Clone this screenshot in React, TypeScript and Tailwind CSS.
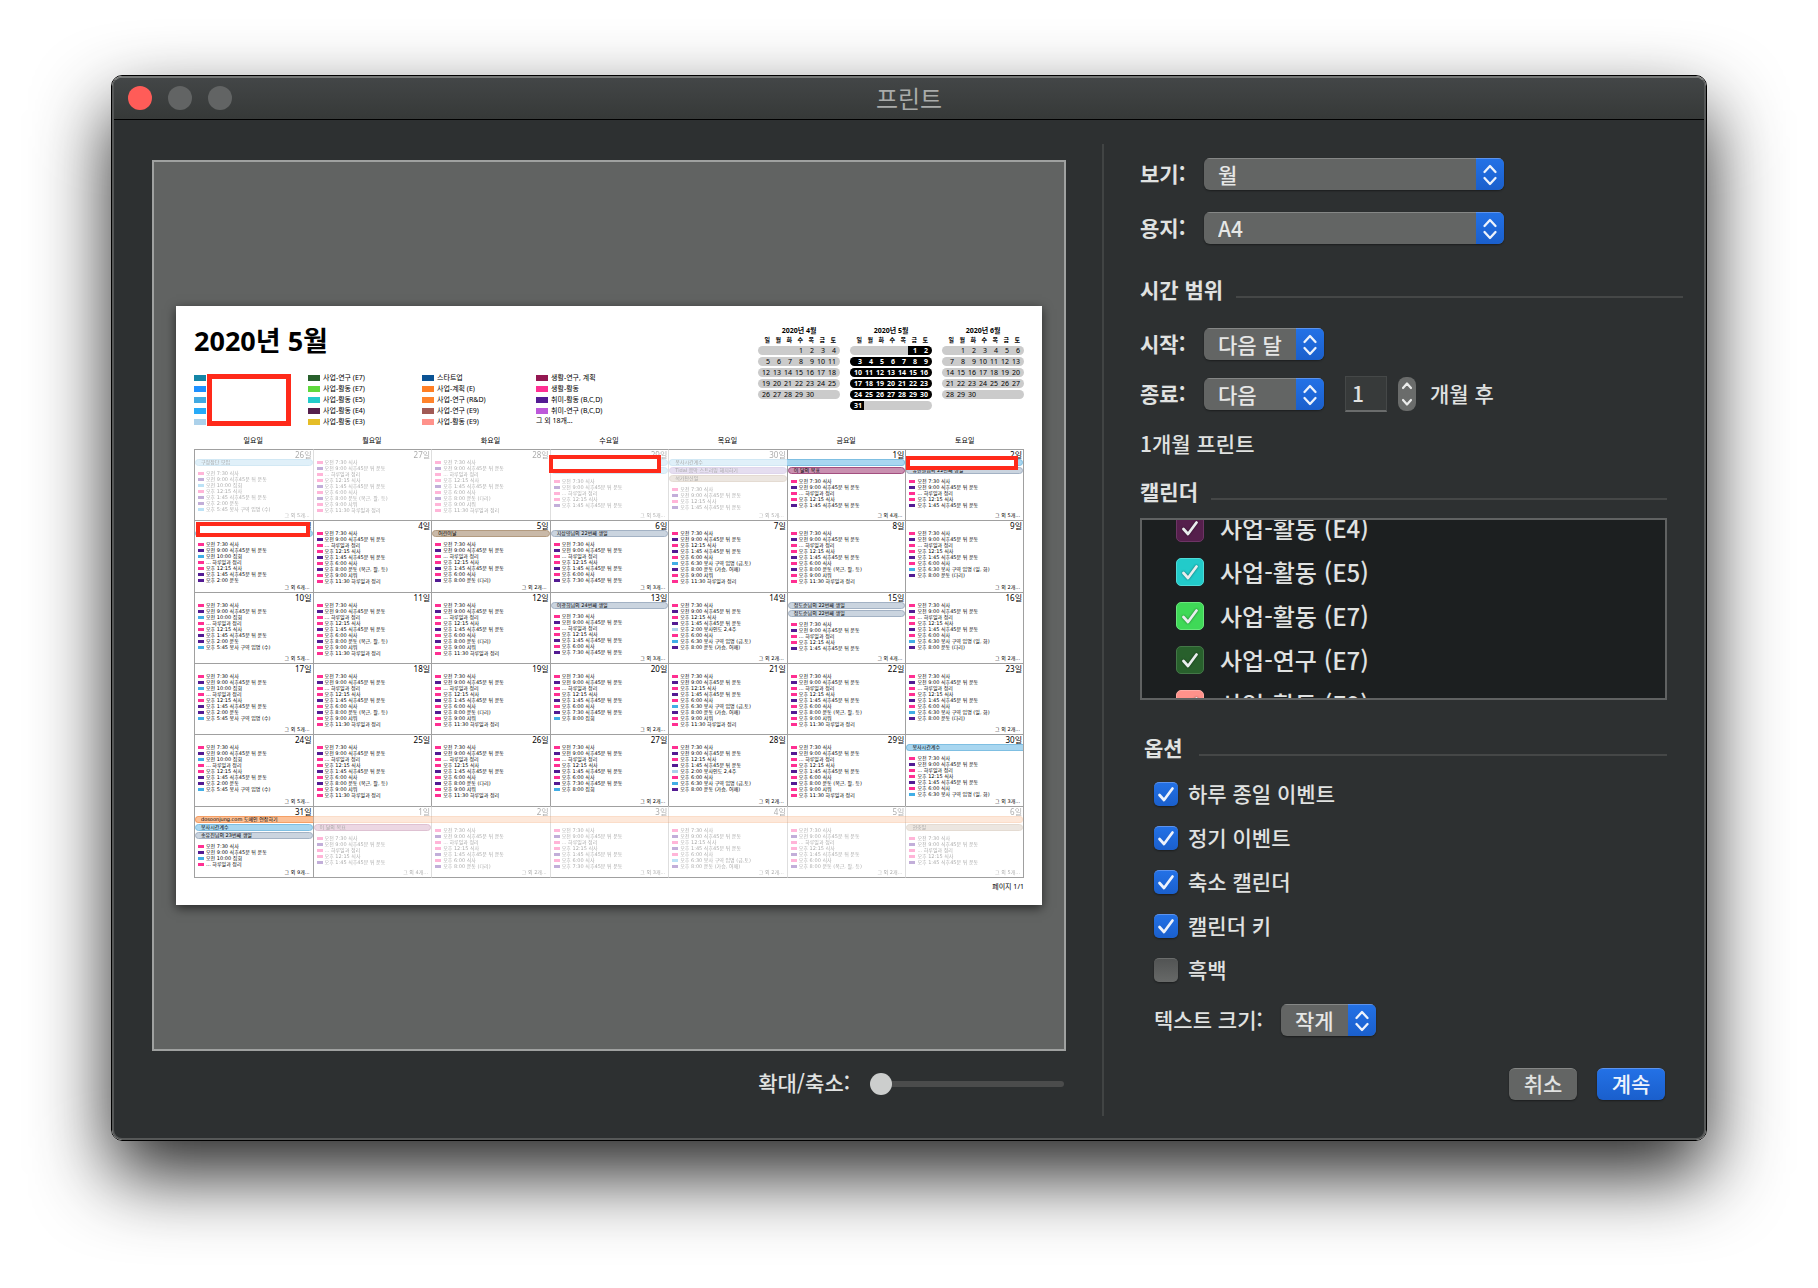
import React from "react";

type Kind = "pink" | "violet" | "sky" | "pale";

const SWATCH: Record<Kind, string> = {
  pink: "bg-[#ff2f92]",
  violet: "bg-[#531b93]",
  sky: "bg-[#41aee6]",
  pale: "bg-[#a9d0ea]",
};

const EVENTS: Record<string, [Kind, string]> = {
  a: ["pink", "오전 7:30 식사"],
  b: ["violet", "오전 9:00 식후45분 뒤 운동"],
  c: ["sky", "오전 10:00 집회"],
  d: ["pink", "... 하루일과 정리"],
  e: ["pink", "오후 12:15 식사"],
  f: ["violet", "오후 1:45 식후45분 뒤 운동"],
  g: ["violet", "오후 2:00 운동"],
  h: ["sky", "오후 5:45 봉사 구역 임명 (수)"],
  i: ["pink", "오후 6:00 식사"],
  j: ["violet", "오후 8:00 운동 (복근, 팔, 등)"],
  k: ["violet", "오후 8:00 운동 (다리)"],
  l: ["pink", "오후 9:00 샤워"],
  m: ["pink", "오후 11:30 하루일과 정리"],
  n: ["sky", "오후 6:30 봉사 구역 임명 (금,토)"],
  o: ["violet", "오후 8:00 운동 (가슴, 어깨)"],
  q: ["sky", "오후 6:30 봉사 구역 임명 (일, 화)"],
  r: ["violet", "오후 7:30 식후45분 뒤 운동"],
  t: ["sky", "오후 8:00 집회"],
  u: ["pale", "오후 2:00 봉사인도 2,4주"],
};

type Tone = "blue" | "purple" | "tan" | "rose" | "slate" | "orange";

const TONES: Record<Tone, string> = {
  blue: "border-[#7fbfe2] bg-[#a8d6f0]",
  purple: "border-[#a58bc9] bg-[#b7a2d6]",
  tan: "border-[#b39b80] bg-[#c9b9a8]",
  rose: "border-[#a34f80] bg-[#c990b0]",
  slate: "border-[#a3b2c4] bg-[#cad4df]",
  orange: "border-[#f5a066] bg-[#fcc096]",
};

type Edge = "full" | "start" | "mid" | "end";

const EDGES: Record<Edge, string> = {
  full: "rounded-full border",
  start: "rounded-l-full border-y border-l",
  mid: "-ml-px border-y",
  end: "-ml-px rounded-r-full border-y border-r",
};

type Banner = { tone: Tone; text?: string; edge?: Edge };

type Day = {
  date: number;
  events: string;
  more?: number;
  faded?: boolean;
  banners?: Banner[];
  mark?: string;
};

const WEEKS: Day[][] = [
  [
    { date: 26, faded: true, events: "abcefgh", more: 5, banners: [{ tone: "blue", text: "구정장단 모임" }] },
    { date: 27, faded: true, events: "abdefijlm" },
    { date: 28, faded: true, events: "abdefiklm" },
    {
      date: 29,
      faded: true,
      events: "abdef",
      more: 5,
      banners: [{ tone: "blue" }, { tone: "blue" }],
      mark: "-left-[2px] right-[7px] top-[5px] h-[18px]",
    },
    {
      date: 30,
      faded: true,
      events: "abef",
      more: 5,
      banners: [
        { tone: "blue", text: "봉사시간계수", edge: "start" },
        { tone: "purple", text: "Tidal 음악 스트리밍 해지하기" },
        { tone: "tan", text: "석가탄신일" },
      ],
    },
    { date: 1, events: "abdef", more: 4, banners: [{ tone: "blue", edge: "end" }, { tone: "rose", text: "이 달의 목표" }] },
    {
      date: 2,
      events: "abdef",
      more: 5,
      banners: [{ tone: "blue" }, { tone: "slate", text: "유한결님의 22번째 생일" }],
      mark: "left-0 right-[5px] top-[6px] h-[14px]",
    },
  ],
  [
    { date: 3, events: "abcdefg", more: 6, banners: [{ tone: "blue" }], mark: "left-px right-[3px] top-px h-[15px]" },
    { date: 4, events: "abdefijlm" },
    { date: 5, events: "abdefik", more: 2, banners: [{ tone: "tan", text: "어린이날" }] },
    { date: 6, events: "abdefir", more: 3, banners: [{ tone: "slate", text: "지상영님의 22번째 생일" }] },
    { date: 7, events: "abefinolm" },
    { date: 8, events: "abdefijlm" },
    { date: 9, events: "abdefiqk", more: 2 },
  ],
  [
    { date: 10, events: "abcdefgh", more: 5 },
    { date: 11, events: "abdefijlm" },
    { date: 12, events: "abdefiklm" },
    { date: 13, events: "abdefir", more: 3, banners: [{ tone: "slate", text: "이광희님의 24번째 생일" }] },
    { date: 14, events: "abefuino", more: 2 },
    {
      date: 15,
      events: "abdef",
      more: 4,
      banners: [
        { tone: "slate", text: "정도순님의 22번째 생일" },
        { tone: "slate", text: "정도순님의 22번째 생일" },
      ],
    },
    { date: 16, events: "abdefiqk", more: 2 },
  ],
  [
    { date: 17, events: "abcdefgh", more: 5 },
    { date: 18, events: "abdefijlm" },
    { date: 19, events: "abdefiklm" },
    { date: 20, events: "abdefirt", more: 2 },
    { date: 21, events: "abefinolm" },
    { date: 22, events: "abdefijlm" },
    { date: 23, events: "abdefiqk", more: 2 },
  ],
  [
    { date: 24, events: "abcdefgh", more: 5 },
    { date: 25, events: "abdefijlm" },
    { date: 26, events: "abdefiklm" },
    { date: 27, events: "abdefirt", more: 2 },
    { date: 28, events: "abefuino", more: 2 },
    { date: 29, events: "abdefijlm" },
    { date: 30, events: "abdefiq", more: 3, banners: [{ tone: "blue", text: "봉사시간계수", edge: "start" }] },
  ],
  [
    {
      date: 31,
      events: "abcd",
      more: 9,
      banners: [
        { tone: "orange", text: "dosoonjung.com 도메인 연장하기", edge: "start" },
        { tone: "blue", text: "봉사시간계수" },
        { tone: "slate", text: "송유진님의 23번째 생일" },
      ],
    },
    {
      date: 1,
      faded: true,
      events: "abdef",
      more: 4,
      banners: [{ tone: "orange", edge: "mid" }, { tone: "rose", text: "이 달의 목표" }],
    },
    { date: 2, faded: true, events: "abdefik", more: 2, banners: [{ tone: "orange", edge: "mid" }] },
    { date: 3, faded: true, events: "abdefir", more: 3, banners: [{ tone: "orange", edge: "mid" }] },
    { date: 4, faded: true, events: "abefino", more: 2, banners: [{ tone: "orange", edge: "mid" }] },
    { date: 5, faded: true, events: "abdefij", more: 2, banners: [{ tone: "orange", edge: "mid" }] },
    {
      date: 6,
      faded: true,
      events: "abdef",
      more: 5,
      banners: [{ tone: "orange", edge: "end" }, { tone: "tan", text: "현충일" }],
    },
  ],
];

const LEGEND: { color: string; label: string }[][] = [
  [
    { color: "bg-[#1485a6]", label: "" },
    { color: "bg-[#1e90ff]", label: "" },
    { color: "bg-[#41aae2]", label: "" },
    { color: "bg-[#27aaf8]", label: "" },
    { color: "bg-[#acd1ea]", label: "" },
  ],
  [
    { color: "bg-[#28602c]", label: "사업-연구 (E7)" },
    { color: "bg-[#5fd93c]", label: "사업-활동 (E7)" },
    { color: "bg-[#22cbca]", label: "사업-활동 (E5)" },
    { color: "bg-[#551f4c]", label: "사업-활동 (E4)" },
    { color: "bg-[#e5bd27]", label: "사업-활동 (E3)" },
  ],
  [
    { color: "bg-[#0b5394]", label: "스타트업" },
    { color: "bg-[#ff7f24]", label: "사업-계획 (E)" },
    { color: "bg-[#ff832b]", label: "사업-연구 (R&D)" },
    { color: "bg-[#a15a55]", label: "사업-연구 (E9)" },
    { color: "bg-[#ff928b]", label: "사업-활동 (E9)" },
  ],
  [
    { color: "bg-[#941751]", label: "생활-연구, 계획" },
    { color: "bg-[#ff2f92]", label: "생활-활동" },
    { color: "bg-[#531b93]", label: "취미-활동 (B,C,D)" },
    { color: "bg-[#bd58da]", label: "취미-연구 (B,C,D)" },
  ],
];

const WEEKDAYS = ["일", "월", "화", "수", "목", "금", "토"];

function MiniMonth({ title, offset, days, current }: { title: string; offset: number; days: number; current?: boolean }) {
  const weeks = Math.ceil((offset + days) / 7);
  const grid = "grid grid-cols-[14px_repeat(5,11px)_13px]";
  return (
    <div className="w-[82px] text-[7px] leading-[9px]">
      <div className="text-center font-bold leading-[10px]">{title}</div>
      <div className={`${grid} text-[6px] font-bold`}>
        {WEEKDAYS.map((d, i) => (
          <span key={d} className={i === 6 ? "pr-[4px] text-right" : "pr-[2px] text-right"}>
            {d}
          </span>
        ))}
      </div>
      <div className="mt-px flex flex-col gap-[2px]">
        {Array.from({ length: weeks }, (_, w) => (
          <div key={w} className={`${grid} h-[9px] overflow-hidden rounded-full bg-[#cbcbcb]`}>
            {WEEKDAYS.map((_, i) => {
              const n = w * 7 + i - offset + 1;
              const valid = n >= 1 && n <= days;
              return (
                <span
                  key={i}
                  className={`text-right ${i === 6 ? "pr-[4px]" : "pr-[2px]"} ${
                    valid && current ? "bg-black font-bold text-white" : ""
                  }`}
                >
                  {valid ? n : ""}
                </span>
              );
            })}
          </div>
        ))}
      </div>
    </div>
  );
}

function DayCell({ day, prevFaded, tall }: { day: Day; prevFaded: boolean; tall: boolean }) {
  return (
    <td
      className={`relative border-l border-t border-t-[#a0a0a0] p-0 align-top ${
        day.faded && prevFaded ? "border-l-[#dedede]" : "border-l-[#a0a0a0]"
      }`}
    >
      <div className={`flex flex-col ${tall ? "h-[71px]" : "h-[70px]"} ${day.faded ? "opacity-35" : ""}`}>
        <div className="h-[9px] pr-px text-right text-[8px] leading-[9px]">{day.date}일</div>
        <div className="flex flex-1 flex-col font-['DejaVu_Sans','Noto_Sans_CJK_KR',sans-serif] text-[5px] leading-[6px]">
          {day.banners && (
            <div className="mb-[3px] flex flex-col">
              {day.banners.map((b, i) => (
                <div
                  key={i}
                  className={`mb-px h-[7px] overflow-hidden whitespace-nowrap pl-[5px] leading-[5px] ${TONES[b.tone]} ${
                    EDGES[b.edge ?? "full"]
                  }`}
                >
                  {b.text}
                </div>
              ))}
            </div>
          )}
          <ul className="flex flex-col pl-[3px]">
            {day.events.split("").map((key) => (
              <li key={key} className="flex h-[6px] items-center gap-[2px] whitespace-nowrap">
                <span className={`h-[3px] w-[6px] ${SWATCH[EVENTS[key][0]]}`} />
                {EVENTS[key][1]}
              </li>
            ))}
          </ul>
          {day.more && <div className="mt-auto h-[8px] pr-[3px] text-right">그 외 {day.more}개...</div>}
        </div>
      </div>
      {day.mark && <div className={`absolute z-10 border-4 border-[#ff2a1a] bg-white ${day.mark}`} />}
    </td>
  );
}

function Paper() {
  return (
    <div className="bg-white px-[18px] pb-[13px] pt-[18px] font-['Noto_Sans','Noto_Sans_CJK_KR',sans-serif] text-black shadow-[0_3px_10px_rgba(0,0,0,0.6)]">
      <div className="flex h-[106px] justify-between">
        <div className="min-w-0 flex-1">
          <h2 className="text-[27px] font-bold leading-[34px]">2020년 5월</h2>
          <div className="relative mt-[14px] grid w-[456px] grid-cols-4">
            {LEGEND.map((col, i) => (
              <ul key={i} className="text-[7px] leading-[11px]">
                {col.map((item, j) => (
                  <li key={j} className="flex h-[11px] items-center gap-[3px] whitespace-nowrap">
                    <span className={`h-[6px] w-[12px] ${item.color}`} />
                    {item.label}
                  </li>
                ))}
                {i === 3 && <li className="h-[11px] leading-[9px]">그 외 18개...</li>}
              </ul>
            ))}
            <div className="absolute left-[13px] top-[2px] h-[52px] w-[84px] border-[5px] border-[#ff2a1a] bg-white" />
          </div>
        </div>
        <div className="flex gap-[10px] pt-[2px]">
          <MiniMonth title="2020년 4월" offset={3} days={30} />
          <MiniMonth title="2020년 5월" offset={5} days={31} current />
          <MiniMonth title="2020년 6월" offset={1} days={30} />
        </div>
      </div>
      <table className="mt-[5px] w-full table-fixed border-separate border-spacing-0">
        <thead>
          <tr>
            {WEEKDAYS.map((d) => (
              <th key={d} className="h-[14px] p-0 align-top text-[7px] font-normal leading-[12px]">
                {d}요일
              </th>
            ))}
          </tr>
        </thead>
        <tbody className="[&>tr:last-child>td]:border-b [&>tr:last-child>td]:border-b-[#a0a0a0] [&>tr>td:last-child]:border-r [&>tr>td:last-child]:border-r-[#a0a0a0]">
          {WEEKS.map((week, w) => (
            <tr key={w}>
              {week.map((day, i) => (
                <DayCell key={i} day={day} prevFaded={i > 0 && !!week[i - 1].faded} tall={w % 3 === 1} />
              ))}
            </tr>
          ))}
        </tbody>
      </table>
      <div className="mt-[3px] text-right text-[7px] leading-[11px]">페이지 1/1</div>
    </div>
  );
}

function Select({ id, value, width }: { id: string; value: string; width: string }) {
  return (
    <div
      className={`relative flex h-8 overflow-hidden rounded-[6px] bg-[#636564] shadow-[0_1px_2px_rgba(0,0,0,0.4)] ${width}`}
    >
      <select
        id={id}
        defaultValue={value}
        className="h-full w-full appearance-none border-t border-[#858786] bg-transparent pb-[3px] pl-[14px] pr-[28px] text-[21px] font-medium text-[#e6e7e6] outline-none"
      >
        <option>{value}</option>
      </select>
      <span className="pointer-events-none absolute inset-y-0 right-0 flex w-7 items-center justify-center border-t border-[#5c93ee] bg-linear-to-b from-[#2371e6] to-[#1a5fcc]">
        <svg width="16" height="22" viewBox="0 0 16 22" fill="none" stroke="#eef3fc" strokeWidth="2.3" strokeLinecap="round" strokeLinejoin="round">
          <path d="M2.5 8 8 2 13.500 8M2.500 14 8 20 13.500 14" />
        </svg>
      </span>
    </div>
  );
}

function SectionTitle({ text, className }: { text: string; className: string }) {
  return (
    <div className={`flex items-center ${className}`}>
      <h3 className="pb-[2px] font-bold leading-[30px]">{text}</h3>
      <div className="mt-[14px] h-[2px] flex-1 bg-[#454747]" />
    </div>
  );
}

function CheckMark({ className }: { className?: string }) {
  return (
    <svg className={className} viewBox="0 0 24 24" fill="none" stroke="currentColor" strokeLinecap="round" strokeLinejoin="round">
      <path d="M5.500 13 10 18 18.500 6.500" strokeWidth="2.700" />
    </svg>
  );
}

const CALENDARS = [
  { label: "사업-활동 (E4)", color: "bg-[#551f4c] border-[#6d3565]" },
  { label: "사업-활동 (E5)", color: "bg-[#22cbca] border-[#4fdbd8]" },
  { label: "사업-활동 (E7)", color: "bg-[#3fd957] border-[#6ae67c]" },
  { label: "사업-연구 (E7)", color: "bg-[#28602c] border-[#437747]" },
  { label: "사업-활동 (E9)", color: "bg-[#ff928b] border-[#ffaca6]" },
];

const OPTIONS = [
  { label: "하루 종일 이벤트", on: true },
  { label: "정기 이벤트", on: true },
  { label: "축소 캘린더", on: true },
  { label: "캘린더 키", on: true },
  { label: "흑백", on: false },
];

function Settings() {
  return (
    <section className="flex w-[564px] shrink-0 flex-col pb-4 pr-px text-[21px] font-medium leading-[30px] text-[#e0e2e1]">
      <div className="grid grid-cols-[64px_1fr] items-center gap-y-[22px] pt-[14px]">
        <label htmlFor="view" className="pb-[2px] font-bold">보기:</label>
        <Select id="view" value="월" width="w-[300px]" />
        <label htmlFor="paper" className="pb-[2px] font-bold">용지:</label>
        <Select id="paper" value="A4" width="w-[300px]" />
      </div>

      <SectionTitle text="시간 범위" className="mt-[30px] gap-[13px] pr-[20px]" />
      <div className="mt-[22px] grid grid-cols-[64px_1fr] items-center gap-y-[18px]">
        <label htmlFor="start" className="pb-[2px] font-bold">시작:</label>
        <Select id="start" value="다음 달" width="w-[120px]" />
        <label htmlFor="end" className="pb-[2px] font-bold">종료:</label>
        <div className="flex h-8 items-center">
          <Select id="end" value="다음" width="w-[120px]" />
          <input
            aria-label="개월 수"
            defaultValue="1"
            className="ml-[21px] h-9 w-[42px] shrink-0 border border-b-2 border-[#454848] border-b-[#6a6c6c] bg-[#373a3a] pb-[2px] pl-[6px] text-[21px] outline-none"
          />
          <div className="ml-[11px] flex h-[34px] w-[18px] flex-col overflow-hidden rounded-[8px] bg-[#6a6c6b]">
            <button type="button" aria-label="늘리기" className="flex flex-1 items-center justify-center">
              <svg width="12" height="9" viewBox="0 0 12 9" fill="none" stroke="#eaebea" strokeWidth="2.200" strokeLinecap="round" strokeLinejoin="round">
                <path d="M2 7 6 2.500 10 7" />
              </svg>
            </button>
            <button type="button" aria-label="줄이기" className="flex flex-1 items-center justify-center">
              <svg width="12" height="9" viewBox="0 0 12 9" fill="none" stroke="#eaebea" strokeWidth="2.200" strokeLinecap="round" strokeLinejoin="round">
                <path d="M2 2 6 6.500 10 2" />
              </svg>
            </button>
          </div>
          <span className="ml-[14px] pb-[2px]">개월 후</span>
        </div>
      </div>
      <p className="mt-[18px] pb-[2px]">1개월 프린트</p>

      <SectionTitle text="캘린더" className="mt-[16px] gap-[13px] pr-[36px]" />
      <div className="mr-[36px] mt-[10px] h-[182px] overflow-hidden border-2 border-[#606262] bg-[#1c1f20]">
        <ul className="-mt-[14px] pl-[34px] text-[24px]">
          {CALENDARS.map((c) => (
            <li key={c.label} className="h-11">
              <label className="flex h-full items-center gap-[16px]">
                <span className="relative flex">
                  <input type="checkbox" defaultChecked className={`size-7 appearance-none rounded-[5px] border ${c.color}`} />
                  <CheckMark className="pointer-events-none absolute left-[2px] top-[2px] size-6 text-[#e9eeee] drop-shadow-[0_0_1px_rgba(0,0,0,0.5)]" />
                </span>
                {c.label}
              </label>
            </li>
          ))}
        </ul>
      </div>

      <SectionTitle text="옵션" className="ml-[4px] mt-[32px] gap-[16px] pr-[36px]" />
      <ul className="mt-[8px] pl-[14px]">
        {OPTIONS.map((o) => (
          <li key={o.label} className="h-11">
            <label className="flex h-full w-fit items-center gap-[10px]">
              <span className="relative flex">
                <input
                  type="checkbox"
                  defaultChecked={o.on}
                  className="size-6 appearance-none rounded-[5px] border-t border-[#6b6d6c] bg-linear-to-b from-[#525454] to-[#676968] shadow-[0_1px_2px_rgba(0,0,0,0.4)] checked:border-[#5c93ee] checked:from-[#2371e6] checked:to-[#1a5fcc]"
                />
                {o.on && <CheckMark className="pointer-events-none absolute inset-0 size-6 text-[#eef3fc]" />}
              </span>
              <span className="pb-[2px]">{o.label}</span>
            </label>
          </li>
        ))}
      </ul>
      <div className="mt-[12px] flex items-center gap-[21px] pl-[14px]">
        <label htmlFor="size" className="w-[106px] whitespace-nowrap pb-[2px]">텍스트 크기:</label>
        <Select id="size" value="작게" width="w-[95px]" />
      </div>

      <div className="mt-8 flex justify-end gap-5 pr-[38px]">
        <button type="button" className="h-8 w-[68px] rounded-[6px] border-t border-[#858786] bg-[#636564] pb-[3px] leading-[28px] shadow-[0_1px_2px_rgba(0,0,0,0.4)]">
          취소
        </button>
        <button type="button" className="h-8 w-[68px] rounded-[6px] border-t border-[#5c93ee] bg-linear-to-b from-[#2371e6] to-[#1a5fcc] pb-[3px] leading-[28px] text-[#eef3fc] shadow-[0_1px_2px_rgba(0,0,0,0.4)]">
          계속
        </button>
      </div>
    </section>
  );
}

export default function App() {
  return (
    <main
      lang="ko"
      className="min-h-screen bg-white px-[111px] pb-[146px] pt-[75px] font-['Noto_Sans_CJK_KR',sans-serif]"
    >
      <div className="rounded-[11px] border border-black shadow-[0_34px_76px_rgba(0,0,0,0.85)]">
        <div className="overflow-hidden rounded-[10px] border-2 border-[#565858] border-t-[#767877] bg-[#2d3031]">
          <header className="grid h-[42px] grid-cols-[1fr_auto_1fr] items-center border-b border-black bg-linear-to-b from-[#434647] to-[#363938] px-[14px] pb-[2px]">
            <div className="flex gap-4">
              <button type="button" aria-label="닫기" className="size-6 rounded-full bg-[#ff5c58]" />
              <button type="button" aria-label="최소화" className="size-6 rounded-full bg-[#626464]" />
              <button type="button" aria-label="최대화" className="size-6 rounded-full bg-[#626464]" />
            </div>
            <h1 className="text-[24px] leading-[36px] text-[#a9abaa]">프린트</h1>
          </header>

          <div className="flex pb-[22px] pl-[38px] pt-6">
            <section className="min-w-0 flex-1 pt-4">
              <div className="border-2 border-[#9fa1a0] bg-[#616362] px-[22px] py-[144px]">
                <Paper />
              </div>
              <div className="mt-[17px] flex h-8 items-center justify-end gap-5 text-[21px] font-medium text-[#e0e2e1]">
                <label htmlFor="zoom" className="pb-[2px]">확대/축소:</label>
                <input
                  id="zoom"
                  type="range"
                  min="0"
                  max="100"
                  defaultValue="0"
                  className="mr-[2px] h-[22px] w-[194px] appearance-none bg-transparent [&::-webkit-slider-runnable-track]:h-[6px] [&::-webkit-slider-runnable-track]:rounded-full [&::-webkit-slider-runnable-track]:bg-[#4b4c4c] [&::-webkit-slider-thumb]:-mt-[8px] [&::-webkit-slider-thumb]:size-[22px] [&::-webkit-slider-thumb]:appearance-none [&::-webkit-slider-thumb]:rounded-full [&::-webkit-slider-thumb]:bg-[#cccecd]"
                />
              </div>
            </section>
            <div className="ml-9 mr-9 w-[2px] bg-[#414444]" />
            <Settings />
          </div>
        </div>
      </div>
    </main>
  );
}
